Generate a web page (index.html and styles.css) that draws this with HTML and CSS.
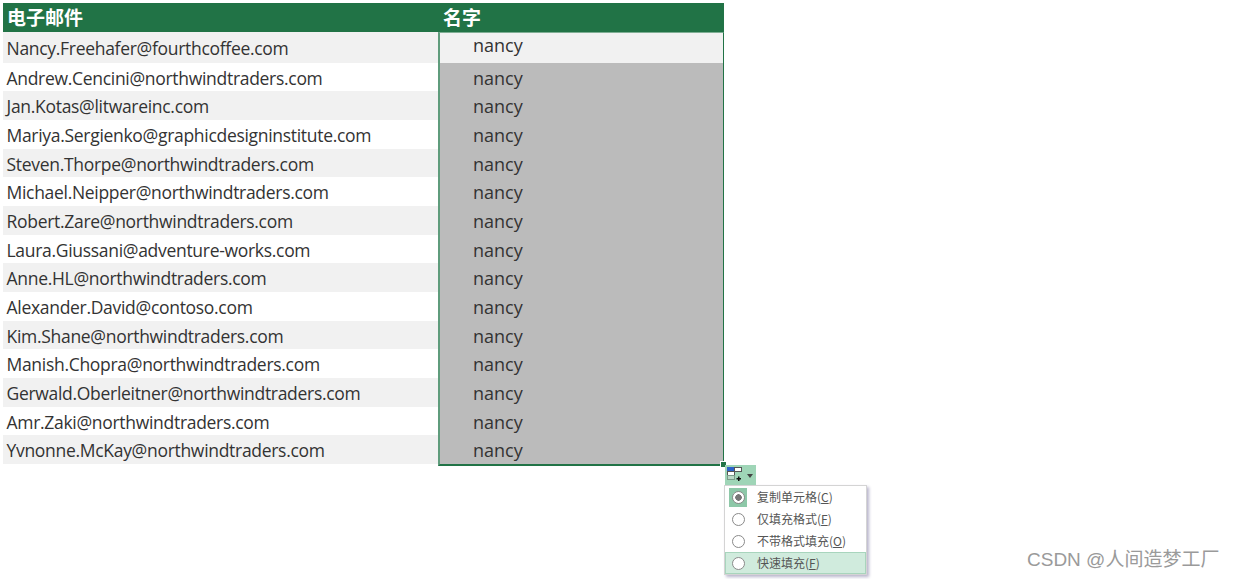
FILE: index.html
```html
<!DOCTYPE html>
<html lang="zh-CN">
  <head>
    <meta charset="utf-8">
    <title>快速填充</title>
    <link rel="stylesheet" href="styles.css">
  </head>
  <body>
    <div class="sheet">
      <div class="head">
        <div class="head-email">电子邮件</div>
        <div class="head-name">名字</div>
      </div>
      <div class="columns">
        <div class="emails">
          <div class="cell first band">Nancy.Freehafer@fourthcoffee.com</div>
          <div class="cell">Andrew.Cencini@northwindtraders.com</div>
          <div class="cell band">Jan.Kotas@litwareinc.com</div>
          <div class="cell">Mariya.Sergienko@graphicdesigninstitute.com</div>
          <div class="cell band">Steven.Thorpe@northwindtraders.com</div>
          <div class="cell">Michael.Neipper@northwindtraders.com</div>
          <div class="cell band">Robert.Zare@northwindtraders.com</div>
          <div class="cell">Laura.Giussani@adventure-works.com</div>
          <div class="cell band">Anne.HL@northwindtraders.com</div>
          <div class="cell">Alexander.David@contoso.com</div>
          <div class="cell band">Kim.Shane@northwindtraders.com</div>
          <div class="cell">Manish.Chopra@northwindtraders.com</div>
          <div class="cell band">Gerwald.Oberleitner@northwindtraders.com</div>
          <div class="cell">Amr.Zaki@northwindtraders.com</div>
          <div class="cell band">Yvnonne.McKay@northwindtraders.com</div>
        </div>
        <div class="names">
          <div class="cell first active">nancy</div>
          <div class="cell">nancy</div>
          <div class="cell">nancy</div>
          <div class="cell">nancy</div>
          <div class="cell">nancy</div>
          <div class="cell">nancy</div>
          <div class="cell">nancy</div>
          <div class="cell">nancy</div>
          <div class="cell">nancy</div>
          <div class="cell">nancy</div>
          <div class="cell">nancy</div>
          <div class="cell">nancy</div>
          <div class="cell">nancy</div>
          <div class="cell">nancy</div>
          <div class="cell">nancy</div>
          <span class="fill-handle"></span>
        </div>
      </div>
    </div>

    <div class="smart-tag">
      <svg width="16" height="16" viewBox="0 0 16 16">
        <rect x="0.5" y="0.5" width="7" height="4" fill="#2b62c8" stroke="#2b62c8" />
        <rect x="7.5" y="0.5" width="7" height="4" fill="#fff" stroke="#555" />
        <rect x="0.5" y="4.5" width="7" height="4" fill="#fff" stroke="#555" />
        <rect x="0.5" y="8.5" width="7" height="4" fill="#b9d8c6" stroke="#7a9a88" />
        <path d="M11 9.5h1.5V11H14v1.5h-1.5V14H11v-1.5H9.5V11H11z" fill="#111" />
      </svg>
      <span class="tag-arrow"></span>
    </div>

    <div class="menu">
      <div class="menu-item">
        <span class="radio-box"><span class="radio checked"></span></span>
        <span class="menu-label">复制单元格(<u>C</u>)</span>
      </div>
      <div class="menu-item">
        <span class="radio-box"><span class="radio"></span></span>
        <span class="menu-label">仅填充格式(<u>F</u>)</span>
      </div>
      <div class="menu-item">
        <span class="radio-box"><span class="radio"></span></span>
        <span class="menu-label">不带格式填充(<u>O</u>)</span>
      </div>
      <div class="menu-item hover">
        <span class="radio-box"><span class="radio"></span></span>
        <span class="menu-label">快速填充(<u>F</u>)</span>
      </div>
    </div>

    <div class="watermark">CSDN @人间造梦工厂</div>
  </body>
</html>
```

FILE: styles.css
```css
body {
  margin: 0;
  padding: 3px;
  background-color: white;
  font-family: "Open Sans", "Noto Sans CJK SC", sans-serif;
  color: #333;
}

/* header row */
.sheet {
  width: 721px;
}
.head {
  display: flex;
  height: 29px;
  background-color: #217346;
  color: white;
  font-family: "Noto Sans CJK SC", sans-serif;
  font-size: 19px;
  font-weight: bold;
  line-height: 28px;
}
.head-email {
  width: 436px;
  padding-left: 4px;
  box-sizing: border-box;
}
.head-name {
  padding-left: 4px;
}

/* table body */
.columns {
  display: flex;
}
.emails {
  width: 435px;
}
.cell {
  height: 28.7px;
  line-height: 31px;
  font-size: 17.5px;
  letter-spacing: -0.3px;
  padding-left: 3.5px;
}
.cell.first {
  height: 30.5px;
  line-height: 33px;
}
.band {
  background-color: #f1f1f1;
}

/* filled column with selection border */
.names {
  position: relative;
  flex: 1;
  box-sizing: border-box;
  border: 2px solid #217346;
  border-top: 1px solid #7fae94;
  border-left-color: #5f9c7c;
  border-right-width: 1px;
  background-color: #bbbbbb;
}
.names .cell {
  padding-left: 33px;
  font-size: 18px;
  letter-spacing: 0;
  line-height: 30px;
}
.names .cell.first {
  height: 29.5px;
  background-color: #f1f1f1;
  line-height: 25px;
}
.fill-handle {
  position: absolute;
  right: -4px;
  bottom: -4px;
  width: 5px;
  height: 5px;
  background-color: #217346;
  border: 1px solid white;
}

/* smart tag and its menu */
.smart-tag {
  position: absolute;
  left: 725px;
  top: 465px;
  width: 31px;
  height: 20px;
  display: flex;
  align-items: center;
  gap: 4px;
  padding-left: 2px;
  box-sizing: border-box;
  background-color: #9fd5b7;
}
.tag-arrow {
  margin-top: 1px;
  border-top: 4px solid #444;
  border-left: 3.5px solid transparent;
  border-right: 3.5px solid transparent;
}
.menu {
  position: absolute;
  left: 724px;
  top: 485px;
  width: 143px;
  height: 90px;
  box-sizing: border-box;
  background-color: white;
  border: 1px solid #d4d4d4;
  box-shadow: 2px 2px 3px #b9b5cc;
  font-family: "Noto Sans CJK SC", sans-serif;
  font-size: 12px;
  color: #555;
}
.menu-item {
  display: flex;
  align-items: center;
  height: 22px;
  gap: 10px;
  padding-left: 4px;
}
.menu-item.hover {
  background-color: #d0ebdd;
  border: 1px solid #a8d5bd;
  box-sizing: border-box;
  padding-left: 3px;
}
.menu-label {
  margin-top: -2px;
}
.radio-box {
  width: 18px;
  height: 19px;
  display: flex;
  align-items: center;
  justify-content: center;
}
.menu-item:first-child .radio-box {
  background-color: #8dc8a8;
}
.radio {
  width: 13px;
  height: 13px;
  border: 1px solid #8a8a8a;
  border-radius: 50%;
  background-color: white;
  box-sizing: border-box;
}
.radio.checked {
  background: radial-gradient(circle, #777 0 3px, white 3.5px);
}

.watermark {
  position: absolute;
  left: 1027px;
  top: 544px;
  font-family: "Liberation Sans", "Noto Sans CJK SC", sans-serif;
  font-size: 19px;
  color: #9a9a9a;
}
```
